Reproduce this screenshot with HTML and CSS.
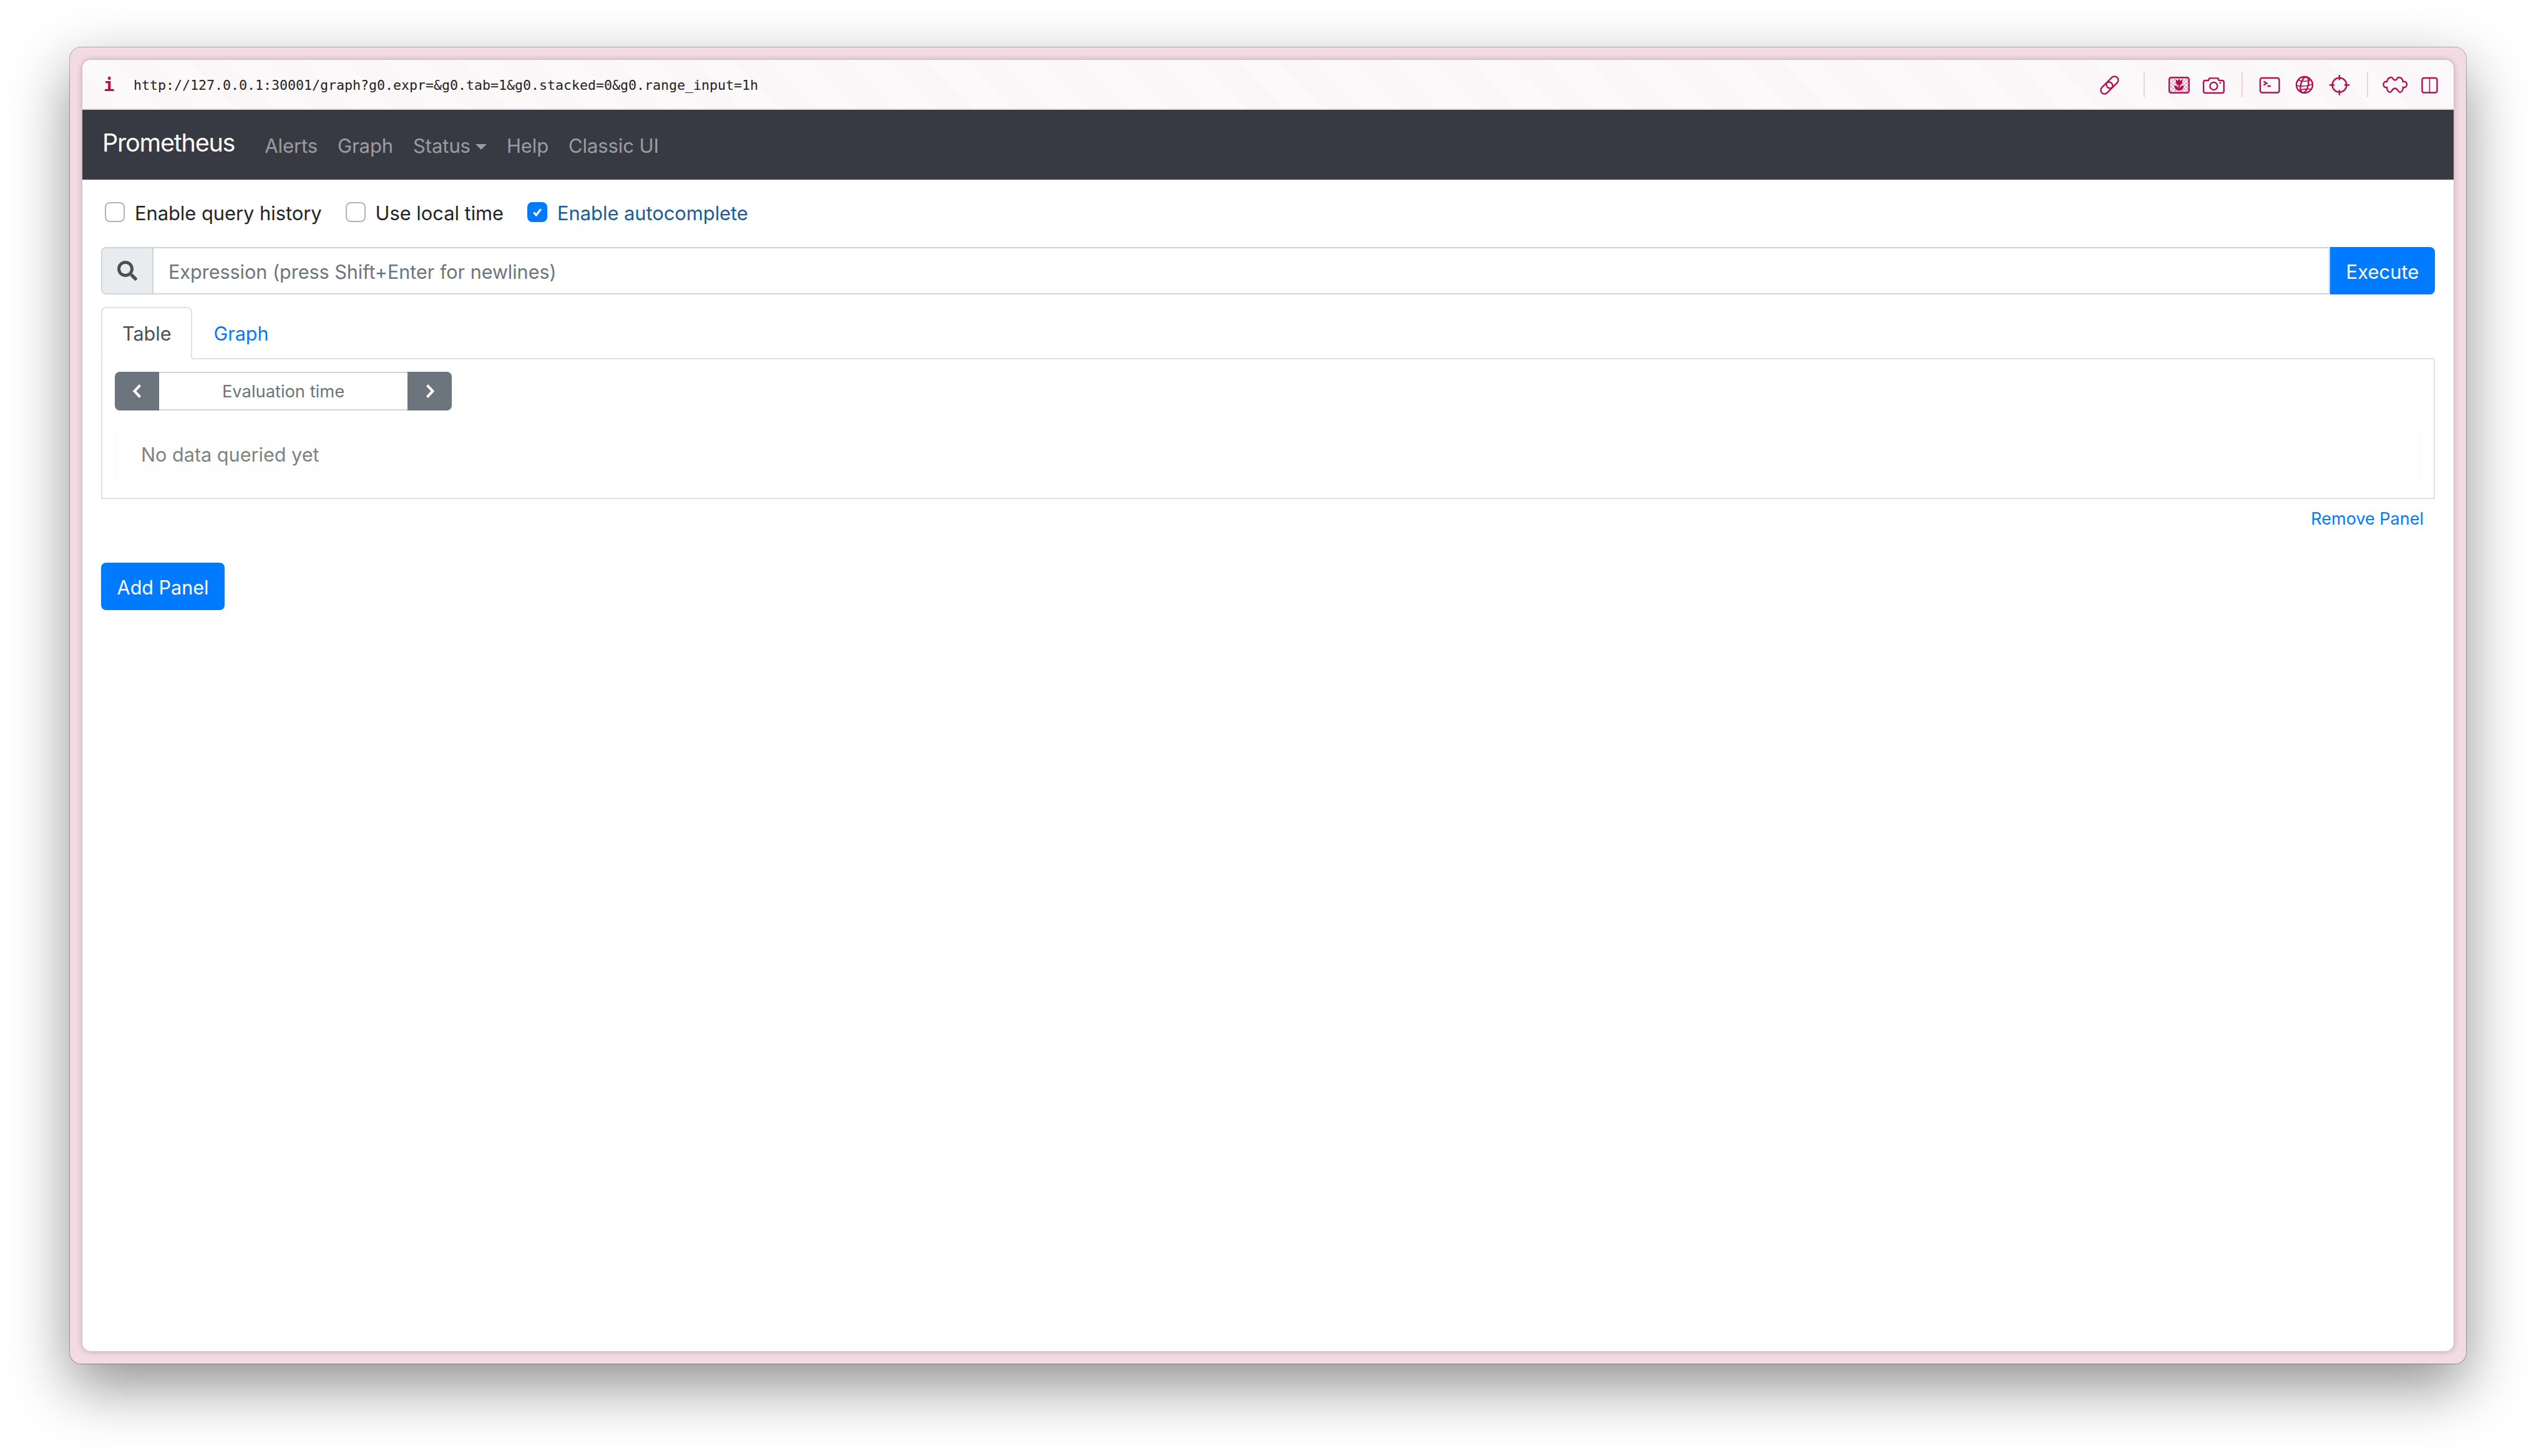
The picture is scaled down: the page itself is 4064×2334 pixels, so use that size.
FILE: index.html
```html
<!DOCTYPE html>
<html lang="en">
<head>
<meta charset="utf-8">
<title>Prometheus</title>
<link rel="stylesheet" href="styles.css">
</head>
<body>
  <div class="window">
    <div class="screen">
      <header class="addressbar">
        <span class="info">i</span>
        <span class="url">http://127.0.0.1:30001/graph?g0.expr=&amp;g0.tab=1&amp;g0.stacked=0&amp;g0.range_input=1h</span>
        <svg class="tool" viewBox="0 0 56 56">
          <rect x="13" y="27" width="22" height="12" rx="6" transform="rotate(-45 24 33)"/>
          <rect x="22" y="18" width="22" height="12" rx="6" transform="rotate(-45 33 24)"/>
        </svg>
        <i class="sep sep-wide"></i>
        <svg class="tool" viewBox="0 0 56 56">
          <defs>
            <pattern id="checker" width="6" height="6" patternUnits="userSpaceOnUse" x="14" y="18">
              <rect width="3" height="3" class="fill-soft"/>
              <rect x="3" y="3" width="3" height="3" class="fill-soft"/>
            </pattern>
          </defs>
          <rect x="13" y="17" width="30" height="23" fill="url(#checker)" class="no-stroke"/>
          <rect x="12.2" y="16.2" width="31.6" height="24.6" rx="3"/>
          <path class="fill-solid" d="M22.8 19l3 2.4 2.2-3 2.2 3 3-2.4v4.4a5.2 5.2 0 0 1-10.4 0z"/>
          <path class="fill-solid" d="M20.5 29c4 0 6.3 2 6.7 7h1.6c.4-5 2.7-7 6.7-7 0 4.800-2.500 8-6.500 8h-2c-4 0-6.500-3.200-6.500-8z"/>
          <path d="M28 27v9" />
        </svg>
        <svg class="tool" viewBox="0 0 56 56">
          <path d="M14 21h5l1.600-3.600h13.800l1.600 3.600h5c1.700 0 2.800 1.100 2.800 2.800v14.400c0 1.700-1.100 2.800-2.800 2.800h-27c-1.700 0-2.800-1.100-2.800-2.800v-14.400c0-1.700 1.100-2.800 2.800-2.800z"/>
          <circle cx="27.500" cy="30" r="6"/>
          <circle class="fill-solid no-stroke" cx="38" cy="25" r="1.400"/>
        </svg>
        <i class="sep"></i>
        <svg class="tool" viewBox="0 0 56 56">
          <rect x="13" y="17" width="30.500" height="23.500" rx="3"/>
          <path d="M18.500 22.500l5 3-5 3M24.500 30h5.500"/>
        </svg>
        <svg class="tool" viewBox="0 0 56 56">
          <circle cx="28" cy="28" r="13"/>
          <ellipse cx="28" cy="28" rx="6" ry="13" transform="rotate(14 28 28)"/>
          <path class="thin" d="M17 20c6 3 15 3 22 0M15 29c8 2 18 1 26-2M18 37c7-2 15-3 22-2"/>
        </svg>
        <svg class="tool" viewBox="0 0 56 56">
          <circle cx="28" cy="28.300" r="11.500"/>
          <path d="M28 12v8.500M28 36.200v8.500M11.800 28.300h8.400M35.800 28.300h8.400"/>
        </svg>
        <i class="sep"></i>
        <svg class="tool" viewBox="0 0 56 56">
          <path d="M15 23C16 18 19 16 22 16C25 16 24 20 28 20.500C32 20 31 16 34 16C38 16 40 18 41 23C44 22 47 24 47 27.500C47 31 44 33 41 32C41 36 39 40 36 40C33 40 33 34 28 33.500C23 34 23 40 20 40C17 40 15 36 15 32C12 33 9.500 31 9.500 27.500C9.500 24 12 22 15 23Z"/>
        </svg>
        <svg class="tool" viewBox="0 0 56 56">
          <rect x="15.500" y="17" width="24" height="23.500" rx="3"/>
          <path class="thin" d="M27.500 17v23.500"/>
        </svg>
      </header>

      <nav class="navbar">
        <a class="brand">Prometheus</a>
        <a class="navlink">Alerts</a>
        <a class="navlink">Graph</a>
        <a class="navlink">Status<b class="caret"></b></a>
        <a class="navlink">Help</a>
        <a class="navlink">Classic UI</a>
      </nav>

      <main class="content">
        <div class="options">
          <label class="option"><span class="box"></span><span class="option-text">Enable query history</span></label>
          <label class="option"><span class="box"></span><span class="option-text">Use local time</span></label>
          <label class="option option-on">
            <span class="box box-on">
              <svg viewBox="0 0 32 32"><path d="M9.500 16.500l4.500 5 8.500-11"/></svg>
            </span><span class="option-text">Enable autocomplete</span></label>
        </div>

        <div class="expression">
          <span class="search-addon">
            <svg viewBox="0 0 512 512"><path d="M505 442.700L405.300 343c-4.500-4.500-10.600-7-17-7H372c27.600-35.300 44-79.700 44-128C416 93.100 322.900 0 208 0S0 93.100 0 208s93.100 208 208 208c48.300 0 92.700-16.400 128-44v16.300c0 6.400 2.500 12.500 7 17l99.700 99.700c9.400 9.400 24.600 9.400 33.900 0l28.300-28.300c9.400-9.400 9.400-24.600.1-34zM208 336c-70.700 0-128-57.200-128-128 0-70.700 57.200-128 128-128 70.700 0 128 57.200 128 128 0 70.700-57.200 128-128 128z"/></svg>
          </span>
          <input class="expr-input" type="text" placeholder="Expression (press Shift+Enter for newlines)">
          <button class="execute">Execute</button>
        </div>

        <div class="tabs">
          <a class="tab tab-active">Table</a>
          <a class="tab">Graph</a>
        </div>

        <section class="tab-pane">
          <div class="timepicker">
            <button class="step step-left"><svg viewBox="0 0 18 24"><path d="M13.500 2.500L4.500 12l9 9.500"/></svg></button>
            <input class="time-input" type="text" placeholder="Evaluation time">
            <button class="step step-right"><svg viewBox="0 0 18 24"><path d="M4.500 2.500l9 9.500-9 9.500"/></svg></button>
          </div>
          <div class="alert">No data queried yet</div>
        </section>

        <div class="panel-actions">
          <a class="remove">Remove Panel</a>
        </div>

        <button class="add-panel">Add Panel</button>
      </main>
    </div>
  </div>
</body>
</html>
```

FILE: styles.css
```css
* {
    margin: 0;
    padding: 0;
    box-sizing: border-box;
}
html, body {
    height: 100%;
}
body {
    background: #fff;
    padding: 76px 112px 148px;
    font-family: Inter, "Liberation Sans", sans-serif;
    font-size: 32px;
    line-height: 48px;
    color: #212529;
    overflow: hidden;
}
button, input {
    font: inherit;
}

/* window frame */
.window {
    height: 2110px;
    padding: 20px;
    background: #f2dbe3;
    border-radius: 18px;
    box-shadow: 0 0 0 1px rgba(0, 0, 0, .28), 0 36px 96px rgba(0, 0, 0, .44);
}
.screen {
    height: 100%;
    background: #fff;
    border-radius: 14px;
    overflow: hidden;
    box-shadow: 0 0 10px rgba(90, 50, 70, .35);
}

/* top address bar */
.addressbar {
    display: flex;
    align-items: center;
    height: 80px;
    padding: 0 10px 0 34px;
    background: repeating-linear-gradient(45deg, #fbf7f9 0 44px, #fcf9fa 44px 88px);
    box-shadow: inset 0 -2px 0 #e6dfe2;
    color: #b01350;
}
.info {
    width: 48px;
    font: bold 29px "DejaVu Sans Mono", monospace;
}
.url {
    flex: 1;
    font: 21.600px "DejaVu Sans Mono", monospace;
    color: #222;
}
.tool {
    width: 56px;
    height: 56px;
    fill: none;
    stroke: #b01350;
    stroke-width: 2.400;
    flex: none;
}
.tool .thin {
    stroke-width: 1.600;
}
.tool .fill-solid {
    fill: #b01350;
    stroke: none;
}
.tool .fill-soft {
    fill: #e7adc3;
    stroke: none;
}
.tool .no-stroke {
    stroke: none;
}
.sep {
    flex: none;
    width: 2px;
    height: 40px;
    margin: 0 15.500px;
    background: #eed2dc;
}
.sep-wide {
    margin: 0 27px;
}

/* navbar */
.navbar {
    display: flex;
    align-items: center;
    height: 112px;
    padding: 0 32px;
    background: #373a42;
}
.brand {
    margin-right: 32px;
    font-size: 39.500px;
    line-height: 60px;
    letter-spacing: -1.200px;
    color: #fff;
    position: relative;
    top: -3px;
}
.navlink {
    padding: 3px 16px 0;
    color: rgba(255, 255, 255, .5);
    font-size: 31px;
    letter-spacing: -.1px;
}
.caret {
    display: inline-block;
    margin-left: 8px;
    vertical-align: 5px;
    border-top: 9px solid;
    border-left: 9px solid transparent;
    border-right: 9px solid transparent;
}

/* page content */
.content {
    padding: 36px 30px 0;
}
.options {
    display: flex;
    height: 32px;
    align-items: center;
    padding-left: 6px;
    margin-bottom: 40px;
    gap: 38px;
    font-size: 30.800px;
}
.option {
    display: flex;
    align-items: center;
}
.option-text {
    padding-top: 3px;
}
.option-on {
    color: #1b5c94;
}
.box {
    width: 32px;
    height: 32px;
    margin-right: 16px;
    border: 2px solid #adb5bd;
    border-radius: 8px;
    background: #fff;
}
.box-on {
    background: #007bff;
    border-color: #007bff;
}
.box svg {
    display: block;
    width: 28px;
    height: 28px;
    fill: none;
    stroke: #fff;
    stroke-width: 3.600;
}

.expression {
    display: flex;
    height: 76px;
    margin-bottom: 20px;
}
.search-addon {
    display: flex;
    align-items: center;
    justify-content: center;
    flex: none;
    width: 84px;
    background: #e9ecef;
    border: 2px solid #ced4da;
    border-radius: 8px 0 0 8px;
}
.search-addon svg {
    width: 32px;
    height: 32px;
    fill: #495057;
}
.expr-input {
    flex: 1;
    padding: 3px 24px 0;
    margin-left: -2px;
    border: 2px solid #ced4da;
    color: #495057;
    outline: none;
    font-size: 30.500px;
}
.expr-input::placeholder {
    color: #6c757d;
    opacity: 1;
}
.execute {
    flex: none;
    width: 168px;
    padding-top: 3px;
    border: none;
    border-radius: 0 8px 8px 0;
    background: #007bff;
    color: #fff;
    font-size: 31px;
}

.tabs {
    display: flex;
    height: 84px;
    border-bottom: 2px solid #dee2e6;
}
.tab {
    height: 84px;
    padding: 17px 32px 15px;
    border: 2px solid transparent;
    border-radius: 8px 8px 0 0;
    color: #007bff;
    font-size: 30.500px;
}
.tab-active {
    color: #495057;
    background: #fff;
    border-color: #dee2e6 #dee2e6 #fff;
}

.tab-pane {
    padding: 20px;
    border: 2px solid #dee2e6;
    border-top: none;
}
.timepicker {
    display: flex;
    width: 540px;
    height: 62px;
    margin-bottom: 20px;
}
.step {
    display: flex;
    align-items: center;
    justify-content: center;
    flex: none;
    width: 71px;
    border: none;
    background: #6c757d;
}
.step svg {
    width: 18px;
    height: 24px;
    fill: none;
    stroke: #fff;
    stroke-width: 4;
}
.step-left {
    border-radius: 8px 0 0 8px;
}
.step-right {
    border-radius: 0 8px 8px 0;
}
.time-input {
    flex: 1;
    min-width: 0;
    padding-top: 2px;
    border: none;
    border-top: 2px solid #ced4da;
    border-bottom: 2px solid #ced4da;
    text-align: center;
    font-size: 27.300px;
    outline: none;
}
.time-input::placeholder {
    color: #6c757d;
    opacity: 1;
}
.alert {
    padding: 25px 40px 23px;
    border: 2px solid #fdfdfe;
    border-radius: 8px;
    background: #fefefe;
    color: #818182;
    font-size: 30.600px;
}

.panel-actions {
    display: flex;
    justify-content: flex-end;
    height: 62px;
    padding: 11px 18px 0 0;
    margin-bottom: 40px;
}
.remove {
    font-size: 27px;
    line-height: 42px;
    color: #007bff;
}
.add-panel {
    display: block;
    width: 198px;
    height: 76px;
    padding-top: 3px;
    border: none;
    border-radius: 8px;
    background: #007bff;
    color: #fff;
    font-size: 30.500px;
}
```
